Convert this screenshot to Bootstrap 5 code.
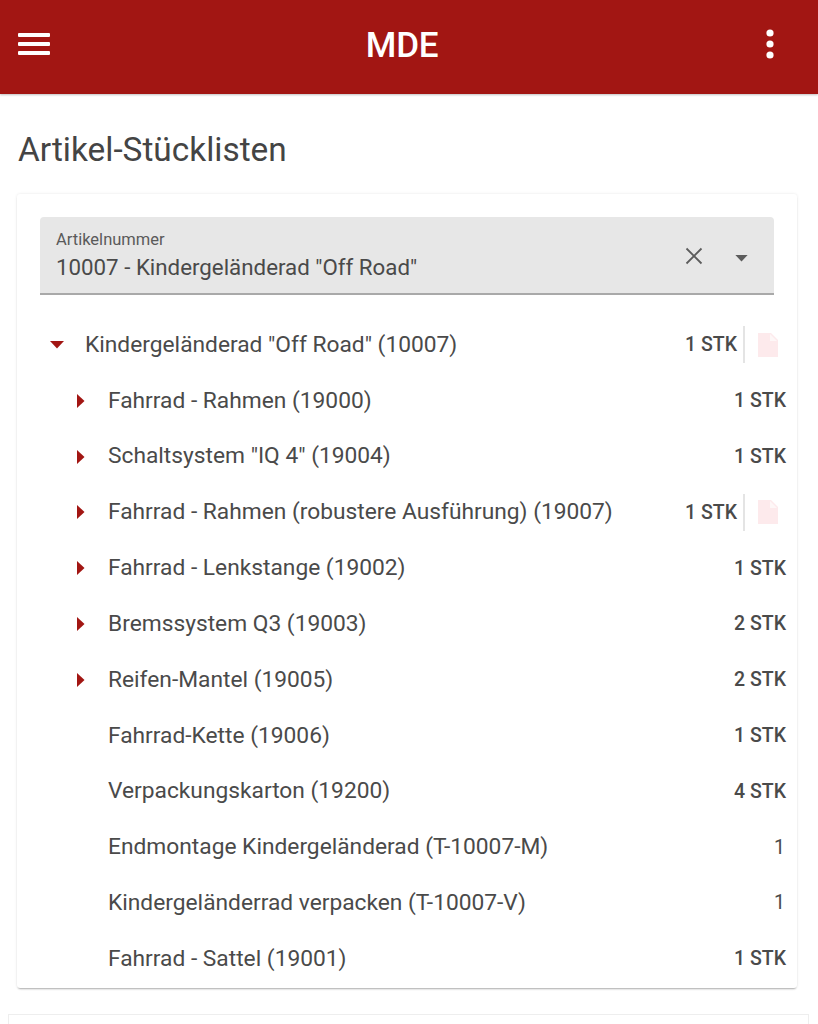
<!DOCTYPE html>
<html lang="de">

<head>
    <meta charset="UTF-8">
    <meta name="viewport" content="width=device-width, initial-scale=1.0">
    <title>MDE</title>
    <link href="https://cdn.jsdelivr.net/npm/bootstrap@5.3.2/dist/css/bootstrap.min.css" rel="stylesheet">
    <style>
        html, body {
            height: 1024px;
            overflow: hidden;
        }

        body {
            font-family: Roboto, "Liberation Sans", sans-serif;
            color: #4a4a4a;
            background: #fff;
        }

        .app-bar {
            height: 94px;
            background: #a21613;
            box-shadow: 0 1px 2px rgba(0, 0, 0, .25);
            padding: 0 44px 0 18px;
        }

        .app-title {
            font-size: 35px;
            font-weight: 500;
            letter-spacing: -.3px;
            line-height: 1;
            color: #fff;
            margin: -4px 12px 0 0;
        }

        .app-bar svg {
            display: block;
            margin-top: -6px;
        }

        .page-title {
            font-size: 33.4px;
            font-weight: 400;
            line-height: 40px;
            color: #444;
            margin: 36px 0 24px 18px;
        }

        .bom-card {
            width: 780px;
            height: 794px;
            margin-left: 17px;
            padding: 23px 11px 0 23px;
            box-shadow: 0 2px 2px -1px rgba(0, 0, 0, .3), 0 0 3px rgba(0, 0, 0, .1);
            background: #fff;
            border-radius: 3px;
        }

        .article-field {
            width: 734px;
            height: 78px;
            background: #e7e7e7;
            border-bottom: 2px solid #a9a9a9;
            border-radius: 4px 4px 0 0;
            padding: 0 26px 0 16px;
            margin-bottom: 22px;
        }

        .field-text {
            padding-top: 14px;
        }

        .field-label {
            font-size: 16.5px;
            line-height: 18px;
            color: #5a5a5a;
        }

        .field-value {
            font-size: 22.3px;
            line-height: 28px;
            margin-top: 4px;
            color: #4a4a4a;
        }

        .field-clear {
            margin: 2px 32px 0 0;
        }

        .field-caret {
            margin-top: 7px;
        }

        .bom-row {
            height: 55.82px;
            font-size: 22.75px;
        }

        .root-arrow {
            width: 45px;
            padding-left: 10px;
        }

        .child-arrow {
            width: 68px;
            padding-left: 37px;
        }

        .root-arrow,
        .child-arrow {
            flex: none;
        }

        .root-arrow svg,
        .child-arrow svg {
            display: block;
        }

        .qty {
            font-size: 19.5px;
            font-weight: 500;
            color: #4a4a4a;
            white-space: nowrap;
        }

        .qty-plain {
            font-weight: 400;
            padding-right: 1px;
        }

        .row-action {
            width: 43px;
            height: 37px;
            margin-left: 6px;
            border-left: 2px solid #e4e4e4;
            padding-left: 13px;
        }

        .next-card {
            height: 20px;
            margin: 26px 9px 0 8px;
            border-top: 1px solid #eee;
            border-left: 1px solid #eee;
            border-right: 1px solid #eee;
        }
    </style>
</head>

<body>
    <!-- Top bar -->
    <nav class="app-bar d-flex align-items-center justify-content-between">
        <svg width="32" height="22" viewBox="0 0 32 22" fill="#fff">
            <rect width="32" height="4" rx="1" />
            <rect y="9" width="32" height="4" rx="1" />
            <rect y="18" width="32" height="4" rx="1" />
        </svg>
        <div class="app-title">MDE</div>
        <svg width="8" height="30" viewBox="0 0 8 30" fill="#fff">
            <circle cx="4" cy="4" r="3.6" />
            <circle cx="4" cy="15" r="3.6" />
            <circle cx="4" cy="26" r="3.6" />
        </svg>
    </nav>

    <h1 class="page-title">Artikel-Stücklisten</h1>

    <div class="bom-card">
        <!-- Article select -->
        <div class="article-field d-flex align-items-center">
            <div class="field-text flex-grow-1 align-self-start">
                <div class="field-label">Artikelnummer</div>
                <div class="field-value">10007 - Kindergeländerad "Off Road"</div>
            </div>
            <svg class="field-clear" width="18" height="18" viewBox="0 0 18 18" stroke="#5c5c5c" stroke-width="1.8" fill="none">
                <path d="M1.5 1.5 16.5 16.5M16.5 1.5 1.5 16.5" />
            </svg>
            <svg class="field-caret" width="13" height="7" viewBox="0 0 14 8" fill="#5c5c5c">
                <path d="M0 0H14L7 7.5Z" />
            </svg>
        </div>

        <div id="bomList"></div>
    </div>

    <div class="next-card"></div>

    <script src="https://cdn.jsdelivr.net/npm/bootstrap@5.3.2/dist/js/bootstrap.bundle.min.js"></script>
    <script>
        const list = document.getElementById('bomList');

        const down = '<svg width="14" height="8" viewBox="0 0 14 8" fill="#a21613"><path d="M0 0H14L7 7.5Z"/></svg>';
        const right = '<svg width="8" height="14" viewBox="0 0 8 14" fill="#a21613"><path d="M0 0V14L7.5 7Z"/></svg>';
        const doc = '<svg width="20" height="24" viewBox="0 0 20 24" fill="#fdeaec"><path d="M0 0H13L20 7V24H0Z"/><path d="M12 1V8H19" fill="#fff" opacity=".6"/></svg>';

        const rows = [
            { name: 'Kindergeländerad "Off Road" (10007)', qty: '1 STK', open: true, root: true, file: true },
            { name: 'Fahrrad - Rahmen (19000)', qty: '1 STK', arrow: true },
            { name: 'Schaltsystem "IQ 4" (19004)', qty: '1 STK', arrow: true },
            { name: 'Fahrrad - Rahmen (robustere Ausführung) (19007)', qty: '1 STK', arrow: true, file: true },
            { name: 'Fahrrad - Lenkstange (19002)', qty: '1 STK', arrow: true },
            { name: 'Bremssystem Q3 (19003)', qty: '2 STK', arrow: true },
            { name: 'Reifen-Mantel (19005)', qty: '2 STK', arrow: true },
            { name: 'Fahrrad-Kette (19006)', qty: '1 STK' },
            { name: 'Verpackungskarton (19200)', qty: '4 STK' },
            { name: 'Endmontage Kindergeländerad (T-10007-M)', qty: '1', plain: true },
            { name: 'Kindergeländerrad verpacken (T-10007-V)', qty: '1', plain: true },
            { name: 'Fahrrad - Sattel (19001)', qty: '1 STK' }
        ];

        rows.forEach((r) => {
            const icon = r.open ? down : (r.arrow ? right : '');
            list.innerHTML += `
                <div class="bom-row d-flex align-items-center">
                    <div class="${r.root ? 'root-arrow' : 'child-arrow'}">${icon}</div>
                    <div class="flex-grow-1 text-truncate">${r.name}</div>
                    <div class="qty ${r.plain ? 'qty-plain' : ''}">${r.qty}</div>
                    ${r.file ? `<div class="row-action d-flex align-items-center">${doc}</div>` : ''}
                </div>`;
        });
    </script>
</body>

</html>
